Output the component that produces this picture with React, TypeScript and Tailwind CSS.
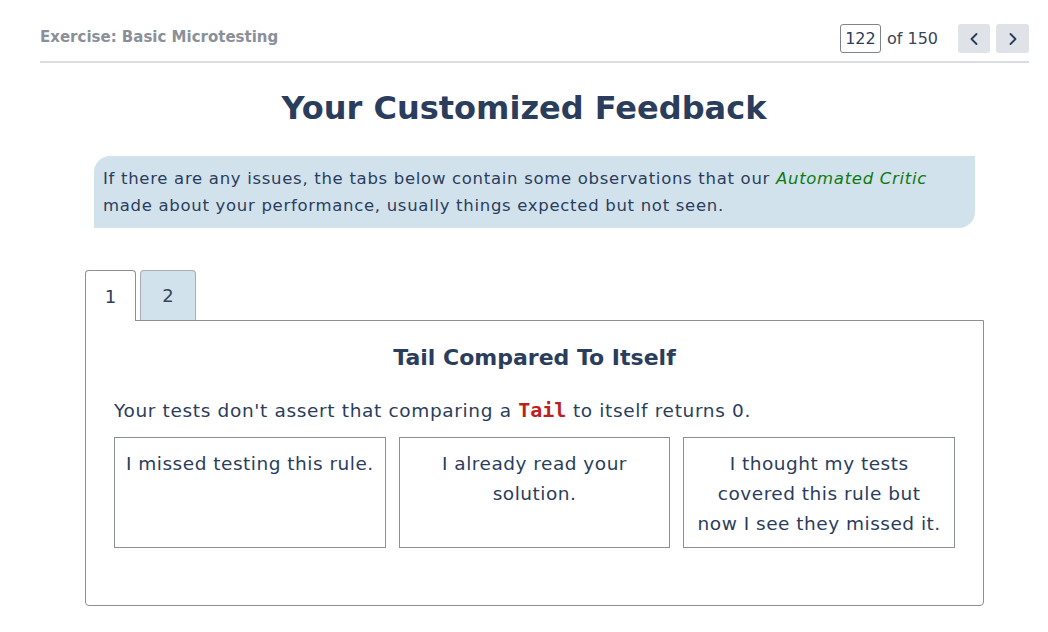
import { ChevronLeft, ChevronRight } from "lucide-react";

// each entry: lines forced apart where the original breaks
const choices = [
  ["I missed testing this rule."],
  ["I already read your solution."],
  ["I thought my tests covered this rule but", "now I see they missed it."],
];

export default function App() {
  return (
    <div
      className="w-[1048px] h-[632px] bg-white text-[#2b3d5c] overflow-hidden"
      style={{ fontFamily: '"DejaVu Sans", sans-serif' }}
    >
      <div className="ml-[40px] mr-[19px] h-[63px] flex items-start justify-between border-b-2 border-[#dadee3]">
        <div className="pt-[26px] text-[15px] leading-[22px] font-semibold text-[#8a9099]">
          Exercise: Basic Microtesting
        </div>
        <div className="flex items-center pt-[24px]">
          <div className="w-[41px] h-[29px] border border-[#7f848c] rounded-[3px] flex items-center justify-center text-[16px]">
            122
          </div>
          <span className="ml-[6px] text-[16px] text-[#3a4556]">of 150</span>
          <div className="ml-[20px] flex gap-[6px]">
            <button className="w-[32px] h-[29px] rounded-[3px] bg-[#dfe2e6] flex items-center justify-center">
              <ChevronLeft size={20} strokeWidth={2.25} className="text-[#2b3d5c]" />
            </button>
            <button className="w-[33px] h-[29px] rounded-[3px] bg-[#dfe2e6] flex items-center justify-center">
              <ChevronRight size={20} strokeWidth={2.25} className="text-[#2b3d5c]" />
            </button>
          </div>
        </div>
      </div>

      <h1 className="mt-[25px] text-center text-[32px] font-bold leading-[40px]">
        Your Customized Feedback
      </h1>

      <div className="mx-[85px] w-[899px]">
        <div className="mt-[28px] mx-[9px] bg-[#d2e2ec] rounded-tl-[16px] rounded-br-[16px] px-[9px] py-[9px] text-[16.5px] tracking-[0.7px] leading-[27px]">
          If there are any issues, the tabs below contain some observations that our{" "}
          <i className="text-[#0e7a14]">Automated Critic</i> made about your performance,
          usually things expected but not seen.
        </div>

        <div className="mt-[41px] flex items-end">
          <div className="w-[51px] h-[51px] border border-b-0 border-[#8b9098] rounded-t-[4px] bg-white flex items-center justify-center text-[18px] relative top-[1px] z-10">
            1
          </div>
          <div className="ml-[4px] w-[56px] h-[50px] border border-b-0 border-[#a8adb4] rounded-t-[4px] bg-[#d2e2ec] flex items-center justify-center text-[18px] text-[#3a4556]">
            2
          </div>
        </div>
        <div className="h-[286px] border border-[#8b9098] rounded-b-[4px] px-[28px]">
          <h2 className="mt-[22px] text-center text-[22px] font-bold leading-[30px]">
            Tail Compared To Itself
          </h2>
          <p className="mt-[23px] text-[18.5px] tracking-[0.65px] leading-[28px]">
            Your tests don't assert that comparing a{" "}
            <code
              className="text-[#c01f1f] font-bold text-[20px] tracking-normal"
              style={{ fontFamily: '"DejaVu Sans Mono", monospace' }}
            >
              Tail
            </code>{" "}
            to itself returns 0.
          </p>
          <div className="mt-[12px] grid grid-cols-3 gap-[13px] w-[841px]">
            {choices.map((lines) => (
              <div
                key={lines[0]}
                className="h-[111px] border border-[#8b9098] px-[10px] pt-[11px] text-center text-[18.5px] tracking-[0.5px] leading-[30px]"
              >
                {lines.map((l, i) => (
                  <span key={i}>
                    {i > 0 && <br />}
                    {l}
                  </span>
                ))}
              </div>
            ))}
          </div>
        </div>
      </div>
    </div>
  );
}
